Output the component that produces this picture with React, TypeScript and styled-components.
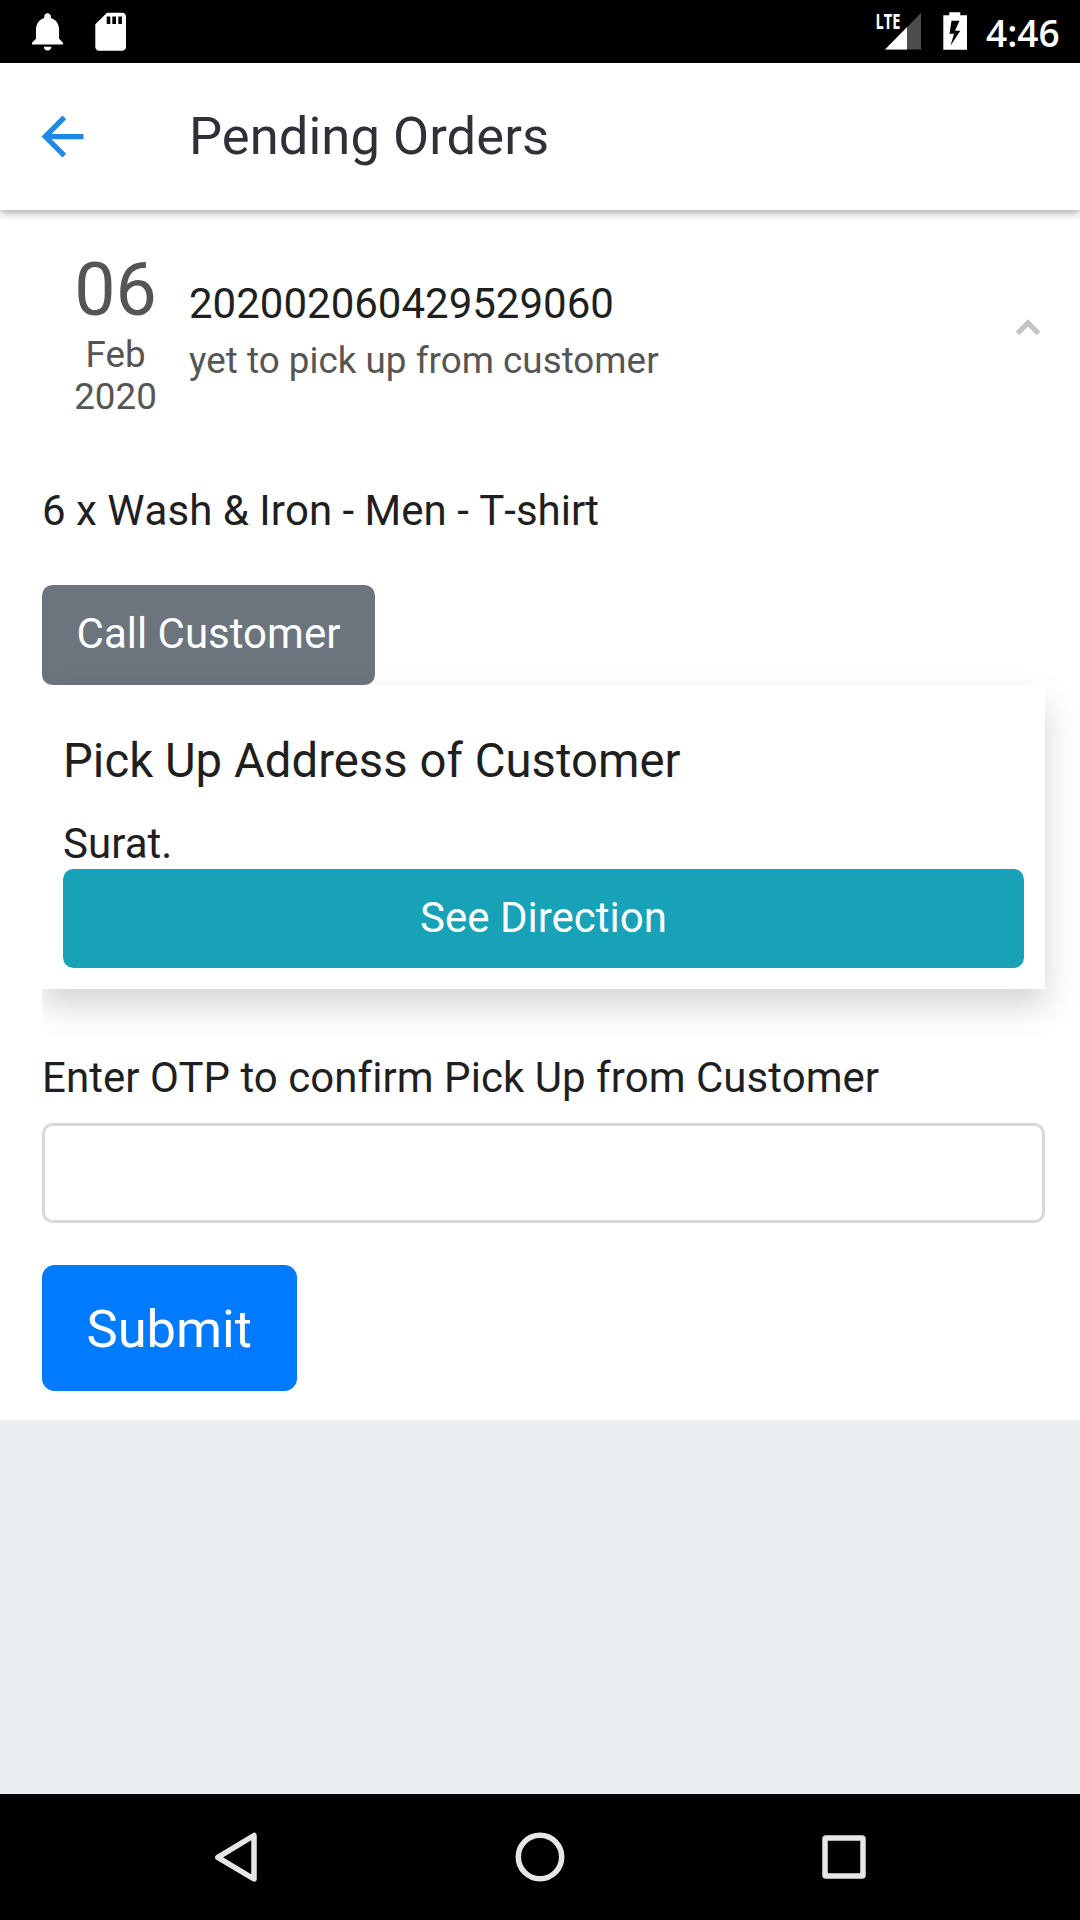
import React from "react";
import styled, { createGlobalStyle } from "styled-components";

const GlobalStyle = createGlobalStyle`
  * { box-sizing: border-box; }
  body { margin: 0; font-family: Roboto, "Noto Sans", sans-serif; }
`;

const Screen = styled.div`
  width: 1080px;
  height: 1920px;
  display: flex;
  flex-direction: column;
  background: #ebeff2;
  color: #1f1f1f;
  overflow: hidden;
`;

const StatusBar = styled.header`
  height: 63px;
  flex: none;
  background: #000;
  color: #fff;
  display: flex;
  align-items: flex-start;
  justify-content: space-between;
  padding: 0 21px 0 26px;
`;

const StatusGroup = styled.div`
  display: flex;
  height: 63px;
`;

const Clock = styled.span`
  font-family: "Open Sans", "Noto Sans", sans-serif;
  font-weight: 600;
  font-size: 37px;
  line-height: 65px;
  width: 73px;
  text-align: right;
  margin-left: 16px;
`;

const Toolbar = styled.nav`
  height: 147px;
  flex: none;
  display: flex;
  align-items: center;
  padding-left: 31px;
  background: #fff;
  z-index: 1;
  box-shadow: 0 3px 8px rgba(0, 0, 0, 0.33);
`;

const Title = styled.h1`
  margin: 0 0 0 95px;
  font-size: 52.5px;
  line-height: 63px;
  font-weight: 400;
  letter-spacing: 0.07px;
  color: #303038;
`;

const Panel = styled.main`
  height: 1210px;
  flex: none;
  background: #fff;
  padding: 0 35px 0 42px;
  display: flex;
  flex-direction: column;
  align-items: flex-start;
`;

const OrderHeader = styled.section`
  align-self: stretch;
  height: 269px;
  display: flex;
`;

const DateColumn = styled.div`
  width: 147px;
  padding-top: 38px;
  text-align: center;
  color: #555;
`;

const Day = styled.div`
  font-size: 73.5px;
  line-height: 84px;
  margin-bottom: 2px;
`;

const DateLine = styled.div`
  font-size: 36.75px;
  line-height: 42px;
`;

const OrderInfo = styled.div`
  flex: 1;
  padding-top: 64px;
`;

const OrderId = styled.div`
  font-size: 42px;
  line-height: 60px;
`;

const OrderStatus = styled.div`
  font-size: 36.75px;
  line-height: 54px;
  letter-spacing: 0.04px;
  color: #555;
`;

const Chevron = styled.svg`
  width: 26px;
  height: 18px;
  margin: 109px 4.5px 0 0;
`;

const Line = styled.p<{ $height: number; $unkerned?: boolean }>`
  margin: 0;
  font-size: 42px;
  line-height: ${(p) => p.$height}px;
  letter-spacing: ${(p) => (p.$unkerned ? 0.01 : 0.045)}px;
  font-kerning: ${(p) => (p.$unkerned ? "none" : "auto")};
  white-space: nowrap;
`;

const Button = styled.button<{ $tone: string; $large?: boolean; $block?: boolean }>`
  display: flex;
  align-items: center;
  justify-content: center;
  border: 0;
  color: #fff;
  font-family: inherit;
  background: ${(p) => p.$tone};
  width: ${(p) => (p.$block ? "100%" : p.$large ? "254.5px" : "333px")};
  height: ${(p) => (p.$large ? 126 : p.$block ? 99 : 100)}px;
  padding: ${(p) => (p.$large ? "1px 0 0" : p.$block ? "0 0 2px" : "0 0 3px")};
  border-radius: ${(p) => (p.$large ? 12.6 : 10.5)}px;
  font-size: ${(p) => (p.$large ? 52.5 : 42)}px;
`;

const CardClip = styled.div`
  width: 1038px;
  overflow-x: clip;
`;

const AddressCard = styled.section`
  width: 1003px;
  height: 304px;
  padding: 48px 21px 20px;
  background: #fff;
  box-shadow: 0 17px 32px rgba(0, 0, 0, 0.17);
`;

const CardTitle = styled.h2`
  margin: 0 0 28px;
  font-size: 47.25px;
  line-height: 57px;
  font-weight: 400;
  letter-spacing: 0.04px;
`;

const Address = styled(Line)`
  margin-bottom: -1px;
`;

const OtpInput = styled.input`
  width: 1003px;
  height: 100px;
  margin: 14px 0 42px;
  padding: 0 30px;
  border: 3px solid #d7d9dc;
  border-radius: 10.5px;
  background: #fff;
  font: 42px Roboto, sans-serif;
`;

const BottomNav = styled.footer`
  height: 126px;
  flex: none;
  margin-top: auto;
  background: #000;
`;

const Spacer = styled.div<{ $h: number }>`
  height: ${(p) => p.$h}px;
  flex: none;
`;

export default function App() {
  return (
    <Screen>
      <GlobalStyle />
      <StatusBar>
        <StatusGroup>
          <svg width="110" height="63" viewBox="26 0 110 63" fill="#fff">
            <path d="M47.5 13.3c2 0 3.4 1.5 3.4 3.4v1.2c5 1.5 8.2 6 8.2 11.6v9.3l4 4v1.7H32v-1.7l4-4v-9.3c0-5.6 3.2-10.1 8.2-11.6v-1.2c0-1.9 1.3-3.4 3.3-3.4z" />
            <path d="M43.8 46.7h7.6c0 2.2-1.7 3.9-3.8 3.9s-3.8-1.7-3.8-3.9z" />
            <path
              fillRule="evenodd"
              d="M107 12.7h15.3c2 0 3.7 1.7 3.7 3.7v30.6c0 2-1.7 3.7-3.7 3.7H99c-2 0-3.7-1.7-3.7-3.7V24.2zM106.7 16.5v7.5h3.6v-7.5zM112.3 16.5v7.5h3.7v-7.5zM118.3 16.5v7.5h3.6v-7.5z"
            />
          </svg>
        </StatusGroup>
        <StatusGroup>
          <svg width="100" height="63" viewBox="870 0 100 63">
            <path d="M921 13v36.5h-36z" fill="#4d4d4d" />
            <path d="M907 27.2v22.3h-22z" fill="#fff" />
            <text
              x="875.5"
              y="29"
              fill="#fff"
              fontFamily="Open Sans, sans-serif"
              fontWeight="700"
              fontSize="21.5"
              textLength="25"
              lengthAdjust="spacingAndGlyphs"
            >
              LTE
            </text>
            <path
              fillRule="evenodd"
              fill="#fff"
              d="M949.3 12.3h11v3h6.7v34.4h-23.7V15.3h6zM951.5 20.8l-2 13h4.5l-3.5 12 9.8-15h-5.3l4.5-10z"
            />
          </svg>
          <Clock>4:46</Clock>
        </StatusGroup>
      </StatusBar>

      <Toolbar>
        <svg width="63" height="63" viewBox="0 0 24 24" fill="#1e88e5">
          <path d="M20 11H7.83l5.59-5.59L12 4l-8 8 8 8 1.41-1.41L7.83 13H20v-2z" />
        </svg>
        <Title>Pending Orders</Title>
      </Toolbar>

      <Panel>
        <OrderHeader>
          <DateColumn>
            <Day>06</Day>
            <DateLine>Feb</DateLine>
            <DateLine>2020</DateLine>
          </DateColumn>
          <OrderInfo>
            <OrderId>202002060429529060</OrderId>
            <OrderStatus>yet to pick up from customer</OrderStatus>
          </OrderInfo>
          <Chevron viewBox="0 0 26 18">
            <path d="M2.5 14.5L13 4l10.5 10.5" fill="none" stroke="#c4c4c6" strokeWidth="5.3" />
          </Chevron>
        </OrderHeader>

        <Line $height={63} $unkerned>6 x Wash &amp; Iron - Men - T-shirt</Line>
        <Spacer $h={43} />
        <Button $tone="#6c757d">Call Customer</Button>

        <CardClip>
          <AddressCard>
            <CardTitle>Pick Up Address of Customer</CardTitle>
            <Address $height={52}>Surat.</Address>
            <Button $tone="#17a2b8" $block>
              See Direction
            </Button>
          </AddressCard>
        </CardClip>

        <Spacer $h={57} />
        <Line $height={63}>Enter OTP to confirm Pick Up from Customer</Line>
        <OtpInput aria-label="OTP" />
        <Button $tone="#007bff" $large>
          Submit
        </Button>
      </Panel>

      <BottomNav>
        <svg width="1080" height="126" viewBox="0 0 1080 126" fill="none" stroke="#e6e6e6" strokeWidth="5.5" strokeLinejoin="round">
          <path d="M217.8 63.3L254 41.5v43.5z" />
          <circle cx="540" cy="63" r="21.7" />
          <rect x="825" y="44" width="38" height="38" rx="1" />
        </svg>
      </BottomNav>
    </Screen>
  );
}
